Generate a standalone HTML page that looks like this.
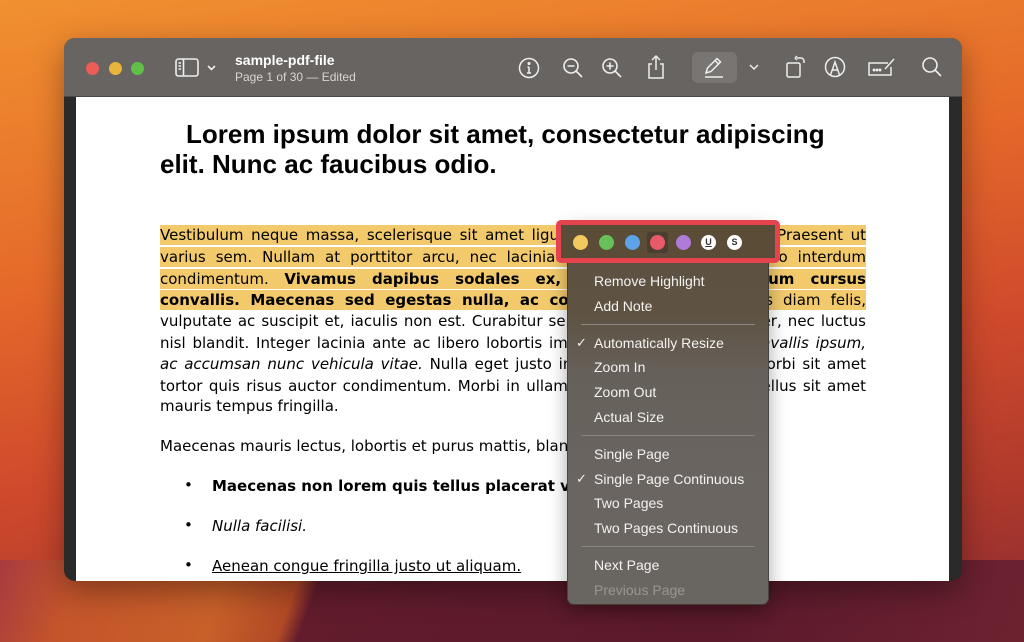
<!DOCTYPE html>
<html><head><meta charset="utf-8"><style>
*{margin:0;padding:0;box-sizing:border-box}
body{width:1024px;height:642px;overflow:hidden;position:relative;font-family:"Liberation Sans",sans-serif;
background:linear-gradient(170deg,#f09030 0%,#e56a2a 35%,#cf4a2c 60%,#b03a2c 80%,#8a2a30 100%);}
.bot{position:absolute;left:0;top:560px;width:1024px;height:82px;background:linear-gradient(110deg,#a83a40 0%,#c4552a 8%,#c8602a 22%,#b24a26 29%,#621c2c 31%,#5a1a2c 70%,#6e2230 100%)}
.win{position:absolute;left:64px;top:38px;width:898px;height:543px;border-radius:11px;background:#2a2a2a;overflow:hidden;box-shadow:0 10px 30px rgba(0,0,0,.35)}
.tb{position:absolute;left:0;top:0;width:898px;height:59px;background:#686461;border-bottom:1px solid #4a4746}
.dot{position:absolute;top:24px;width:13px;height:13px;border-radius:50%}
.page{position:absolute;left:12px;top:59px;width:873px;height:484px;background:#fff;overflow:hidden}
.t1{position:absolute;color:#fff;font-weight:bold;font-size:14px;left:171px;top:14px}
.t2{position:absolute;color:#d8d5d2;font-size:12px;left:171px;top:32px}
svg.i{position:absolute}
.h{position:absolute;left:110px;font:bold 26px "Liberation Sans",sans-serif;color:#000;white-space:nowrap}
.ln{position:absolute;left:84px;width:706px;height:20px;font:15px "DejaVu Sans",sans-serif;color:#000;text-align:justify;text-align-last:justify;line-height:20px;white-space:nowrap;overflow:hidden}
.hl{background:#f2ca6c}
.ln span.j{display:block;white-space:normal}
.b{position:absolute;left:84px;font:15px "DejaVu Sans",sans-serif;white-space:nowrap}
.menu{position:absolute;left:567px;top:222px;width:202px;height:383px;border-radius:7px;background:linear-gradient(180deg,#5c503f 0px,#5e5343 90px,#66605a 150px,#6a6561 260px,#696561 383px);box-shadow:0 6px 18px rgba(0,0,0,.35);border:1px solid rgba(40,40,40,.5)}
.menu .it{position:absolute;left:26px;color:#f4f2f0;font-size:14px;font-family:"Liberation Sans",sans-serif;white-space:nowrap}
.menu .ck{position:absolute;left:8px;color:#f2f0ee;font-size:13px}
.menu .sep{position:absolute;left:13px;width:174px;height:1px;background:#8a8580}
.red{position:absolute;left:556px;top:220px;width:224px;height:43px;border:5px solid #e5444f;border-radius:5px}
.cb{position:absolute;top:235px;width:15px;height:15px;border-radius:50%}
</style></head><body>
<div class="bot"></div>
<div class="win">
 <div class="tb">
  <div class="dot" style="left:22px;background:#ec5d55"></div>
  <div class="dot" style="left:45px;background:#e8b43c"></div>
  <div class="dot" style="left:67px;background:#5fbf48"></div>
  <svg class="i" style="left:111px;top:19px" width="44" height="22" viewBox="0 0 44 22" fill="none" stroke="#eee" stroke-width="1.6"><rect x="1" y="2" width="22" height="17" rx="2.5"/><line x1="8.5" y1="2" x2="8.5" y2="19"/><line x1="3.5" y1="6" x2="6" y2="6"/><line x1="3.5" y1="9" x2="6" y2="9"/><line x1="3.5" y1="12" x2="6" y2="12"/><path d="M33 9l3.5 3.5L40 9"/></svg>
  <div class="t1">sample-pdf-file</div>
  <div class="t2">Page 1 of 30 — Edited</div>
  <svg class="i" style="left:454px;top:19px" width="22" height="22" viewBox="0 0 22 22" fill="none" stroke="#eee" stroke-width="1.5"><circle cx="11" cy="11" r="9.5"/><line x1="11" y1="10" x2="11" y2="16"/><line x1="9" y1="16" x2="13" y2="16"/><line x1="9.5" y1="10" x2="11" y2="10"/><circle cx="11" cy="6.5" r=".8" fill="#eee"/></svg>
  <svg class="i" style="left:498px;top:19px" width="22" height="22" viewBox="0 0 22 22" fill="none" stroke="#eee" stroke-width="1.6"><circle cx="9" cy="9" r="7"/><line x1="14" y1="14" x2="20" y2="20"/><line x1="5.5" y1="9" x2="12.5" y2="9"/></svg>
  <svg class="i" style="left:537px;top:19px" width="22" height="22" viewBox="0 0 22 22" fill="none" stroke="#eee" stroke-width="1.6"><circle cx="9" cy="9" r="7"/><line x1="14" y1="14" x2="20" y2="20"/><line x1="5.5" y1="9" x2="12.5" y2="9"/><line x1="9" y1="5.5" x2="9" y2="12.5"/></svg>
  <svg class="i" style="left:582px;top:16px" width="20" height="26" viewBox="0 0 20 26" fill="none" stroke="#eee" stroke-width="1.5"><path d="M6 10H3v14h14V10h-3"/><path d="M10 16V2M6 6l4-4 4 4"/></svg>
  <div style="position:absolute;left:628px;top:14px;width:45px;height:31px;border-radius:6px;background:#797572"></div>
  <svg class="i" style="left:639px;top:18px" width="24" height="24" viewBox="0 0 24 24" fill="none" stroke="#eee" stroke-width="1.5"><path d="M3 17l1.5-5L14 2.5l3.5 3.5L8 15.5z"/><line x1="12" y1="4.5" x2="15.5" y2="8"/><line x1="2" y1="21" x2="20" y2="21"/></svg>
  <svg class="i" style="left:684px;top:25px" width="12" height="8" viewBox="0 0 12 8" fill="none" stroke="#eee" stroke-width="1.5"><path d="M2 2l4 4 4-4"/></svg>
  <svg class="i" style="left:721px;top:17px" width="22" height="24" viewBox="0 0 22 24" fill="none" stroke="#eee" stroke-width="1.5"><rect x="2" y="8" width="13" height="14" rx="1.5"/><path d="M12 3h4a3 3 0 0 1 3 3v2M10 3l2-2M10 3l2 2"/></svg>
  <svg class="i" style="left:760px;top:18px" width="22" height="22" viewBox="0 0 22 22" fill="none" stroke="#eee" stroke-width="1.5"><circle cx="11" cy="11" r="9.5"/><path d="M6.5 19l4.5-13 4.5 13M8 14h6"/></svg>
  <svg class="i" style="left:803px;top:18px" width="30" height="22" viewBox="0 0 30 22" fill="none" stroke="#eee" stroke-width="1.5"><path d="M21 7H2v12h22V11"/><path d="M18 13l9-10"/><circle cx="7" cy="14" r=".7" fill="#eee"/><circle cx="10" cy="14" r=".7" fill="#eee"/><circle cx="13" cy="14" r=".7" fill="#eee"/></svg>
  <svg class="i" style="left:857px;top:18px" width="22" height="22" viewBox="0 0 22 22" fill="none" stroke="#eee" stroke-width="1.6"><circle cx="9" cy="9" r="7"/><line x1="14" y1="14" x2="20" y2="20"/></svg>
 </div>
 <div class="page">
  <div class="h" style="top:22px">Lorem ipsum dolor sit amet, consectetur adipiscing</div>
  <div class="h" style="left:84px;top:52px">elit. Nunc ac faucibus odio.</div>
  <div class="ln hl" style="top:128px"><span class="j">Vestibulum neque massa, scelerisque sit amet ligula eu, congue molestie mi. Praesent ut</span></div>
  <div class="ln hl" style="top:150px"><span class="j">varius sem. Nullam at porttitor arcu, nec lacinia nisi. Ut ac dolor vitae odio interdum</span></div>
  <div class="ln hl" style="top:172px"><span class="j">condimentum. <b>Vivamus dapibus sodales ex, vitae malesuada ipsum cursus</b></span></div>
  <div class="ln hl" style="top:193px"><span class="j"><b>convallis. Maecenas sed egestas nulla, ac condimentum orci.</b> Mauris diam felis,</span></div>
  <div class="ln" style="top:214px"><span class="j">vulputate ac suscipit et, iaculis non est. Curabitur semper arcu ac ligula semper, nec luctus</span></div>
  <div class="ln" style="top:236px"><span class="j">nisl blandit. Integer lacinia ante ac libero lobortis imperdiet. <i>Nullam mollis convallis ipsum,</i></span></div>
  <div class="ln" style="top:257px"><span class="j"><i>ac accumsan nunc vehicula vitae.</i> Nulla eget justo in felis tristique fringilla. Morbi sit amet</span></div>
  <div class="ln" style="top:279px"><span class="j">tortor quis risus auctor condimentum. Morbi in ullamcorper elit. Nulla iaculis tellus sit amet</span></div>
  <div class="b" style="top:300px">mauris tempus fringilla.</div>
  <div class="b" style="top:340px">Maecenas mauris lectus, lobortis et purus mattis, blandit dictum tellus.</div>
  <div class="b" style="left:108px;top:379px">•</div><div class="b" style="left:136px;top:380px;font-weight:bold">Maecenas non lorem quis tellus placerat varius.</div>
  <div class="b" style="left:108px;top:419px">•</div><div class="b" style="left:136px;top:420px;font-style:italic">Nulla facilisi.</div>
  <div class="b" style="left:108px;top:459px">•</div><div class="b" style="left:136px;top:460px;text-decoration:underline">Aenean congue fringilla justo ut aliquam. </div>
 </div>
</div>
<div class="menu">
 <div class="it" style="top:50px">Remove Highlight</div>
 <div class="it" style="top:75px">Add Note</div>
 <div class="sep" style="top:101px"></div>
 <div class="ck" style="top:112px">✓</div><div class="it" style="top:112px">Automatically Resize</div>
 <div class="it" style="top:136px">Zoom In</div>
 <div class="it" style="top:161px">Zoom Out</div>
 <div class="it" style="top:186px">Actual Size</div>
 <div class="sep" style="top:212px"></div>
 <div class="it" style="top:223px">Single Page</div>
 <div class="ck" style="top:248px">✓</div><div class="it" style="top:248px">Single Page Continuous</div>
 <div class="it" style="top:272px">Two Pages</div>
 <div class="it" style="top:297px">Two Pages Continuous</div>
 <div class="sep" style="top:323px"></div>
 <div class="it" style="top:334px">Next Page</div>
 <div class="it" style="top:359px;color:#9a958f">Previous Page</div>
</div>
<div style="position:absolute;left:561px;top:225px;width:214px;height:33px;background:#5a4c37"></div>
<div style="position:absolute;left:647px;top:232px;width:21px;height:21px;background:#4a3e30;border-radius:3px"></div>
<div class="cb" style="left:573px;background:#f3c860"></div>
<div class="cb" style="left:599px;background:#67c05a"></div>
<div class="cb" style="left:625px;background:#5ea2e8"></div>
<div class="cb" style="left:650px;background:#e8596a"></div>
<div class="cb" style="left:676px;background:#b07ad8"></div>
<div class="cb" style="left:701px;background:#fff;color:#333;font:bold 9px 'Liberation Sans',sans-serif;text-align:center;line-height:15px;text-decoration:underline">U</div>
<div class="cb" style="left:727px;background:#fff;color:#333;font:bold 9px 'Liberation Sans',sans-serif;text-align:center;line-height:15px">S</div>
<div class="red"></div>
</body></html>
